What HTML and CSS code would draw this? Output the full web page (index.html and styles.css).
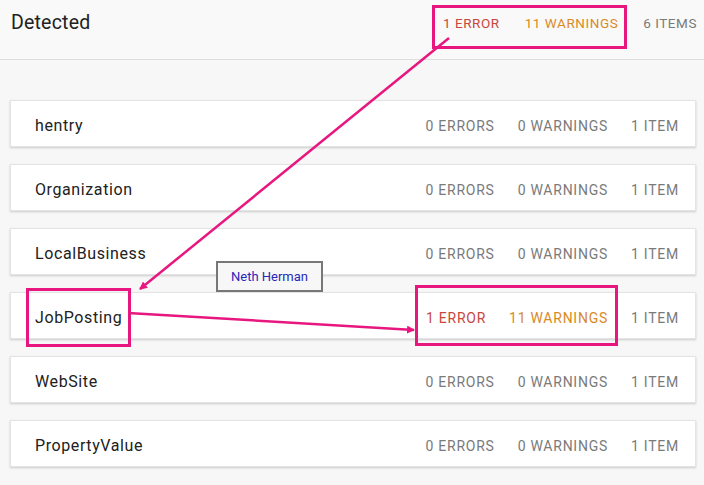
FILE: index.html
```html
<!DOCTYPE html>
<html>
<head>
<meta charset="utf-8">
<link rel="stylesheet" href="styles.css">
</head>
<body>
<div class="page">
  <header class="head">
    <h1 class="title">Detected</h1>
    <div class="stats head-stats">
      <span class="err">1 ERROR</span>
      <span class="warn">11 WARNINGS</span>
      <span class="items">6 ITEMS</span>
    </div>
  </header>
  <main class="list">
    <div class="card"><span class="name">hentry</span><div class="stats"><span>0 ERRORS</span><span>0 WARNINGS</span><span>1 ITEM</span></div></div>
    <div class="card"><span class="name">Organization</span><div class="stats"><span>0 ERRORS</span><span>0 WARNINGS</span><span>1 ITEM</span></div></div>
    <div class="card"><span class="name">LocalBusiness</span><div class="stats"><span>0 ERRORS</span><span>0 WARNINGS</span><span>1 ITEM</span></div></div>
    <div class="card"><span class="name">JobPosting</span><div class="stats"><span class="err">1 ERROR</span><span class="warn">11 WARNINGS</span><span>1 ITEM</span></div></div>
    <div class="card"><span class="name">WebSite</span><div class="stats"><span>0 ERRORS</span><span>0 WARNINGS</span><span>1 ITEM</span></div></div>
    <div class="card"><span class="name">PropertyValue</span><div class="stats"><span>0 ERRORS</span><span>0 WARNINGS</span><span>1 ITEM</span></div></div>
  </main>
  <svg class="overlay" width="704" height="485" viewBox="0 0 704 485">
    <defs>
      <marker id="ah" markerWidth="8" markerHeight="8" refX="7" refY="4" orient="auto" markerUnits="userSpaceOnUse">
        <path d="M0,0 L8,4 L0,8 Z" fill="#e8177f"/>
      </marker>
    </defs>
    <g fill="none" stroke="#e8177f" stroke-width="3">
      <rect x="433.5" y="6.5" width="192" height="41"/>
      <rect x="27.5" y="289.5" width="102" height="56"/>
      <rect x="416.5" y="286.5" width="200" height="58"/>
      <line x1="449" y1="38" x2="140" y2="289" stroke-width="2.5" marker-end="url(#ah)"/>
      <line x1="128" y1="313" x2="414" y2="330" stroke-width="2.5" marker-end="url(#ah)"/>
    </g>
  </svg>
  <div class="label">Neth Herman</div>
</div>
</body>
</html>
```
FILE: styles.css
```css
* { box-sizing: border-box; }
html, body { margin: 0; padding: 0; }
body {
  background: #f7f7f7;
  font-family: Roboto, "Liberation Sans", Arial, sans-serif;
  width: 704px;
  height: 485px;
  overflow: hidden;
}
.page { position: relative; width: 704px; height: 485px; }
.head {
  height: 60px;
  display: flex;
  align-items: flex-start;
  justify-content: space-between;
  padding: 11px 7px 0 11px;
  border-bottom: 1px solid #dedede;
  background: #f9f9f9;
}
.title {
  margin: 0;
  font-size: 19.5px;
  line-height: 24px;
  font-weight: 400;
  color: #212121;
  letter-spacing: 0.2px;
}
.stats {
  display: flex;
  gap: 23px;
  font-size: 14px;
  letter-spacing: 0.75px;
  color: #7a7a7a;
}
.head-stats {
  gap: 25px;
  font-size: 13.5px;
  line-height: 24px;
  letter-spacing: 0.55px;
}
.err { color: #c8473c; }
.warn { color: #d98a1f; }
.list {
  padding: 40px 8px 0 10px;
  display: flex;
  flex-direction: column;
  gap: 17px;
}
.card {
  height: 47px;
  background: #fff;
  border: 1px solid #e4e4e4;
  box-shadow: 0 1px 2px rgba(0,0,0,0.18);
  display: flex;
  align-items: center;
  justify-content: space-between;
  padding: 3px 16px 0 24px;
}
.card .stats { padding-top: 1px; }
.name {
  font-size: 16px;
  color: #212121;
  letter-spacing: 0.6px;
}
.overlay { position: absolute; left: 0; top: 0; pointer-events: none; }
.label {
  position: absolute;
  left: 216px;
  top: 261px;
  width: 107px;
  height: 31px;
  border: 2px solid #777;
  background: #f7f7f7;
  color: #2828b8;
  font-size: 13px;
  display: flex;
  align-items: center;
  justify-content: center;
}
```
